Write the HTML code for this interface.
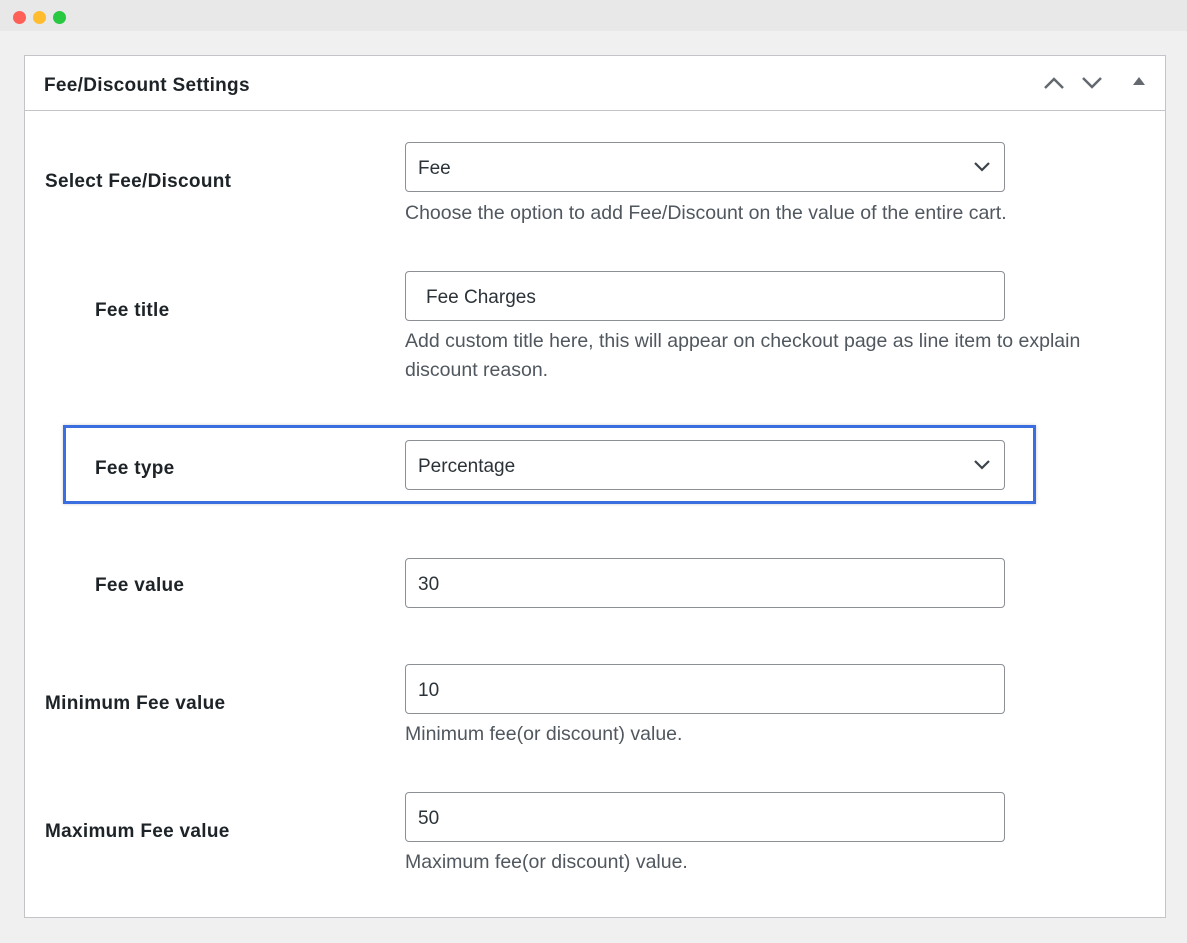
<!DOCTYPE html>
<html><head><style>
*{margin:0;padding:0;box-sizing:border-box}
body{width:1187px;height:943px;background:#f0f0f0;font-family:"Liberation Sans",sans-serif;position:relative;overflow:hidden;color:#1d2327}
.bar{position:absolute;left:0;top:0;width:1187px;height:31px;background:#e8e8e8}
.dot{position:absolute;top:11px;width:13px;height:13px;border-radius:50%}
.panel{position:absolute;left:24px;top:55px;width:1142px;height:863px;background:#fff;border:1px solid #c3c4c7}
.hdr{position:absolute;left:0;top:0;width:100%;height:55px;border-bottom:1px solid #c3c4c7}
.t{position:absolute;font-size:19px;font-weight:bold;color:#1d2327;white-space:nowrap;letter-spacing:0.3px}
.in{position:absolute;left:405px;width:600px;height:50px;border:1px solid #8c8f94;border-radius:4px;background:#fff;font-size:19px;color:#2c3338;padding-left:12px;line-height:52px}
.d{position:absolute;left:405px;font-size:19.5px;color:#50575e;line-height:29px;white-space:nowrap}
.chev{position:absolute;right:14px;top:18px}
.box{position:absolute;left:63px;top:425px;width:973px;height:79px;border:3px solid #3b6fe0;box-shadow:0 0 3px rgba(0,0,0,.2)}
</style></head><body>
<div class="bar"></div>
<div class="dot" style="left:13px;background:#fe5f57"></div>
<div class="dot" style="left:33px;background:#febc2e"></div>
<div class="dot" style="left:53px;background:#28c840"></div>
<div class="panel"><div class="hdr">
<div class="t" style="left:19px;top:19px;font-size:19px">Fee/Discount Settings</div>
<svg style="position:absolute;left:1018px;top:20px" width="22" height="14"><path d="M2 12L11 3L20 12" stroke="#646970" stroke-width="2.5" fill="none"/></svg>
<svg style="position:absolute;left:1056px;top:20px" width="22" height="14"><path d="M2 2L11 11L20 2" stroke="#646970" stroke-width="2.5" fill="none"/></svg>
<svg style="position:absolute;left:1107px;top:20px" width="14" height="10"><path d="M1 9L7 1L13 9Z" fill="#646970"/></svg>
</div></div>
<div class="t" style="left:45px;top:171px">Select Fee/Discount</div>
<div class="in" style="top:142px">Fee<svg class="chev" width="16" height="12"><path d="M1 2L8 9L15 2" stroke="#3c434a" stroke-width="2.2" fill="none"/></svg></div>
<div class="d" style="top:199px">Choose the option to add Fee/Discount on the value of the entire cart.</div>
<div class="t" style="left:95px;top:300px">Fee title</div>
<div class="in" style="top:271px;padding-left:20px">Fee Charges</div>
<div class="d" style="top:327px">Add custom title here, this will appear on checkout page as line item to explain<br>discount reason.</div>
<div class="box"></div>
<div class="t" style="left:95px;top:458px">Fee type</div>
<div class="in" style="top:440px">Percentage<svg class="chev" width="16" height="12"><path d="M1 2L8 9L15 2" stroke="#3c434a" stroke-width="2.2" fill="none"/></svg></div>
<div class="t" style="left:95px;top:575px">Fee value</div>
<div class="in" style="top:558px">30</div>
<div class="t" style="left:45px;top:693px">Minimum Fee value</div>
<div class="in" style="top:664px">10</div>
<div class="d" style="top:720px">Minimum fee(or discount) value.</div>
<div class="t" style="left:45px;top:821px">Maximum Fee value</div>
<div class="in" style="top:792px">50</div>
<div class="d" style="top:848px">Maximum fee(or discount) value.</div>
</body></html>
